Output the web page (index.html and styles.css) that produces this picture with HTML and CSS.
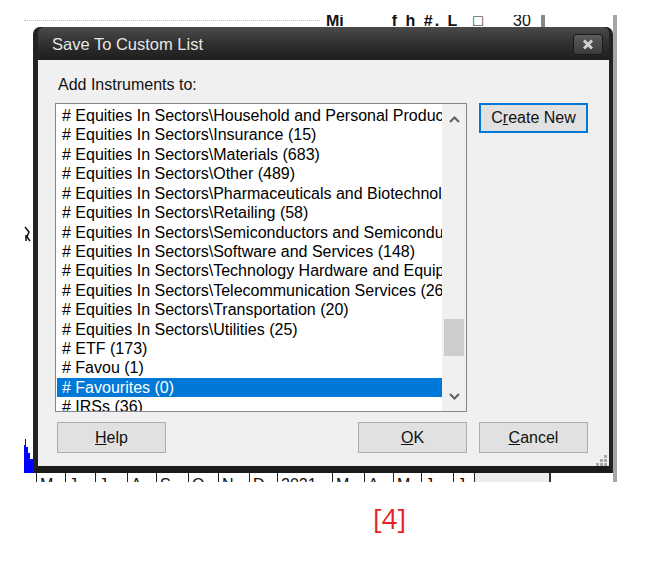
FILE: index.html
```html
<!DOCTYPE html>
<html>
<head>
    <title>Save To Custom List</title>
    <link rel="stylesheet" href="styles.css">
</head>
<body>
    <div class="shot">
        <div class="chartTop">
            <div class="gridLine"></div>
            <span class="frag frag1">Mi</span>
            <span class="frag frag2">f h #. L</span>
            <span class="frag frag3">&#9633;</span>
            <span class="frag frag4">30</span>
            <span class="topBar"></span>
        </div>

        <div class="chartLeft">
            <svg width="9" height="446" viewBox="0 0 9 446">
                <path d="M1 200 L5 205 L3 210 L6 214 M2 208 L2 214" stroke="#111" stroke-width="1.5" fill="none"/>
                <path d="M0 418 L1 418 L1 412 L2 412 L2 420 L4 420 L4 426 L6 426 L6 432 L9 432 L9 446 L0 446 Z" fill="#0000ff"/>
            </svg>
        </div>

        <div class="dialog">
            <div class="titleBar">
                <span class="titleText">Save To Custom List</span>
                <div class="closeBtn">
                    <svg width="12" height="11" viewBox="0 0 12 11">
                        <path d="M2 1.5 L10 9.5 M10 1.5 L2 9.5" stroke="#d0d0d0" stroke-width="3"/>
                    </svg>
                </div>
            </div>
            <div class="client">
                <div class="addLabel">Add Instruments to:</div>
                <div class="mainRow">
                    <div class="listBox">
                        <div class="listItems">
                            <div class="item"># Equities In Sectors\Household and Personal Products (11)</div>
                            <div class="item"># Equities In Sectors\Insurance (15)</div>
                            <div class="item"># Equities In Sectors\Materials (683)</div>
                            <div class="item"># Equities In Sectors\Other (489)</div>
                            <div class="item"># Equities In Sectors\Pharmaceuticals and Biotechnology (251)</div>
                            <div class="item"># Equities In Sectors\Retailing (58)</div>
                            <div class="item"># Equities In Sectors\Semiconductors and Semiconductor Equipment (43)</div>
                            <div class="item"># Equities In Sectors\Software and Services (148)</div>
                            <div class="item"># Equities In Sectors\Technology Hardware and Equipment (96)</div>
                            <div class="item"># Equities In Sectors\Telecommunication Services (26)</div>
                            <div class="item"># Equities In Sectors\Transportation (20)</div>
                            <div class="item"># Equities In Sectors\Utilities (25)</div>
                            <div class="item"># ETF (173)</div>
                            <div class="item"># Favou (1)</div>
                            <div class="item selected"># Favourites (0)</div>
                            <div class="item"># IRSs (36)</div>
                        </div>
                        <div class="scrollBar">
                            <svg class="arrowUp" width="11" height="7" viewBox="0 0 11 7">
                                <path d="M1 6 L5.5 1.5 L10 6" stroke="#606060" stroke-width="2" fill="none"/>
                            </svg>
                            <div class="thumb"></div>
                            <svg class="arrowDown" width="11" height="7" viewBox="0 0 11 7">
                                <path d="M1 1 L5.5 5.5 L10 1" stroke="#606060" stroke-width="2" fill="none"/>
                            </svg>
                        </div>
                    </div>
                    <button class="btn default">C<u>r</u>eate New</button>
                </div>
                <div class="buttonRow">
                    <button class="btn help"><u>H</u>elp</button>
                    <button class="btn"><u>O</u>K</button>
                    <button class="btn"><u>C</u>ancel</button>
                </div>
                <div class="grip">
                    <svg width="11" height="11" viewBox="0 0 11 11">
                        <rect x="8" y="0" width="3" height="3" fill="#a8a8a8"/>
                        <rect x="4" y="4" width="3" height="3" fill="#a8a8a8"/>
                        <rect x="8" y="4" width="3" height="3" fill="#a8a8a8"/>
                        <rect x="0" y="8" width="3" height="3" fill="#a8a8a8"/>
                        <rect x="4" y="8" width="3" height="3" fill="#a8a8a8"/>
                        <rect x="8" y="8" width="3" height="3" fill="#a8a8a8"/>
                    </svg>
                </div>
            </div>
        </div>

        <div class="edge"></div>

        <div class="chartBottom">
            <span class="cell c1">M</span>
            <span class="cell c2">J</span>
            <span class="cell c3">J</span>
            <span class="cell c4">A</span>
            <span class="cell c5">S</span>
            <span class="cell c6">O</span>
            <span class="cell c7">N</span>
            <span class="cell c8">D</span>
            <span class="cell c9">2021</span>
            <span class="cell c10">M</span>
            <span class="cell c11">A</span>
            <span class="cell c12">M</span>
            <span class="cell c13">J</span>
            <span class="cell c14">J</span>
            <span class="cell grayBox"></span>
        </div>
    </div>

    <p class="caption">[4]</p>
</body>
</html>
```

FILE: styles.css
```css
body {
    margin: 0;
    background-color: #ffffff;
    font-family: "Liberation Sans", Arial, sans-serif;
}

.shot {
    display: grid;
    grid-template-columns: 9px 580px 4px;
    grid-template-rows: 12px 446px 9px;
    width: 593px;
    margin: 15px 0 0 24px;
    background-color: #ffffff;
}

/* chart pieces peeking out around the dialog */
.chartTop {
    grid-column: 1 / 3;
    grid-row: 1;
    display: flex;
    align-items: flex-start;
    overflow: hidden;
    position: relative;
}

.gridLine {
    width: 296px;
    margin-top: 5px;
    border-top: 1px dotted #bbbbbb;
}

.frag {
    font-size: 16px;
    font-weight: bold;
    line-height: 12px;
    color: #111;
}

.frag1 { margin-left: 6px; }
.frag2 { margin-left: 48px; letter-spacing: 2px; }
.frag3 { margin-left: 14px; font-weight: normal; }
.frag4 { margin-left: 30px; font-weight: normal; }

.topBar {
    width: 4px;
    height: 12px;
    margin-left: 10px;
    background-color: #888;
}

.chartLeft {
    grid-column: 1;
    grid-row: 2;
}

.edge {
    grid-column: 3;
    grid-row: 1 / 4;
    background-color: #a6a6a6;
}

.chartBottom {
    grid-column: 1 / 3;
    grid-row: 3;
    display: flex;
    overflow: hidden;
    padding-left: 12px;
}

.cell {
    border-left: 1px solid #222;
    font-size: 16px;
    line-height: 24px;
    height: 9px;
    padding-left: 3px;
    overflow: hidden;
    color: #111;
    box-sizing: border-box;
}

.c1 { width: 29px; }
.c2 { width: 30px; }
.c3 { width: 32px; }
.c4 { width: 29px; }
.c5 { width: 32px; }
.c6 { width: 30px; }
.c7 { width: 31px; }
.c8 { width: 28px; }
.c9 { width: 55px; }
.c10 { width: 32px; }
.c11 { width: 29px; }
.c12 { width: 28px; }
.c13 { width: 32px; }
.c14 { width: 21px; }

.grayBox {
    width: 77px;
    background-color: #ececec;
    border-right: 2px solid #333;
}

/* dialog window */
.dialog {
    grid-column: 2;
    grid-row: 2;
    display: flex;
    flex-direction: column;
    background-color: #1e1e1e;
    border-radius: 7px 7px 0 0;
    border-left: 5px solid #222;
    border-right: 4px solid #222;
    border-bottom: 7px solid #1b1b1b;
    box-sizing: border-box;
}

.titleBar {
    display: flex;
    align-items: flex-start;
    justify-content: space-between;
    height: 33px;
    padding: 0 6px 0 14px;
    background: linear-gradient(#4a4a4a, #2c2c2c 60%, #1e1e1e);
    border-radius: 6px 6px 0 0;
}

.titleText {
    margin-top: 8px;
    font-size: 16.5px;
    color: #e6e6e6;
}

.closeBtn {
    display: flex;
    align-items: center;
    justify-content: center;
    width: 30px;
    height: 21px;
    margin-top: 7px;
    border: 1px solid #1a1a1a;
    border-radius: 3px;
    background: linear-gradient(#5c5c5c, #3a3a3a);
    box-sizing: border-box;
}

.client {
    flex: 1;
    display: flex;
    flex-direction: column;
    padding: 15px 21px 13px 17px;
    background-color: #f0f0f0;
    position: relative;
}

.addLabel {
    padding-left: 3px;
    font-size: 16px;
    line-height: 20px;
    color: #111;
    margin-bottom: 8px;
}

.mainRow {
    display: flex;
    align-items: flex-start;
    gap: 12px;
}

.listBox {
    display: flex;
    width: 412px;
    height: 309px;
    border: 1px solid #828790;
    background-color: #ffffff;
    box-sizing: border-box;
}

.listItems {
    flex: 1;
    padding-top: 2px;
    overflow: hidden;
}

.item {
    height: 19.43px;
    line-height: 19.43px;
    margin: 0 0 0 1px;
    padding-left: 5px;
    font-size: 16px;
    color: #000;
    white-space: nowrap;
    overflow: hidden;
}

.item.selected {
    background-color: #0078d7;
    color: #ffffff;
}

.scrollBar {
    display: flex;
    flex-direction: column;
    align-items: center;
    width: 24px;
    background-color: #f0f0f0;
}

.arrowUp {
    margin-top: 12px;
}

.thumb {
    width: 20px;
    height: 37px;
    margin-top: 196px;
    background-color: #cdcdcd;
}

.arrowDown {
    margin-top: 37px;
}

.btn {
    width: 109px;
    height: 31px;
    padding: 0;
    font-family: "Liberation Sans", Arial, sans-serif;
    font-size: 16px;
    color: #111;
    background-color: #e1e1e1;
    border: 1px solid #adadad;
}

.btn.default {
    height: 30px;
    border: 2px solid #0078d7;
}

.buttonRow {
    display: flex;
    gap: 12px;
    margin-top: 10px;
    padding-left: 2px;
}

.btn.help {
    margin-right: auto;
}

.grip {
    position: absolute;
    right: 2px;
    bottom: 0;
    line-height: 0;
}

.caption {
    margin: 18px 0 0 373px;
    font-family: "Open Sans", sans-serif;
    font-size: 27px;
    color: #e42222;
}
```
